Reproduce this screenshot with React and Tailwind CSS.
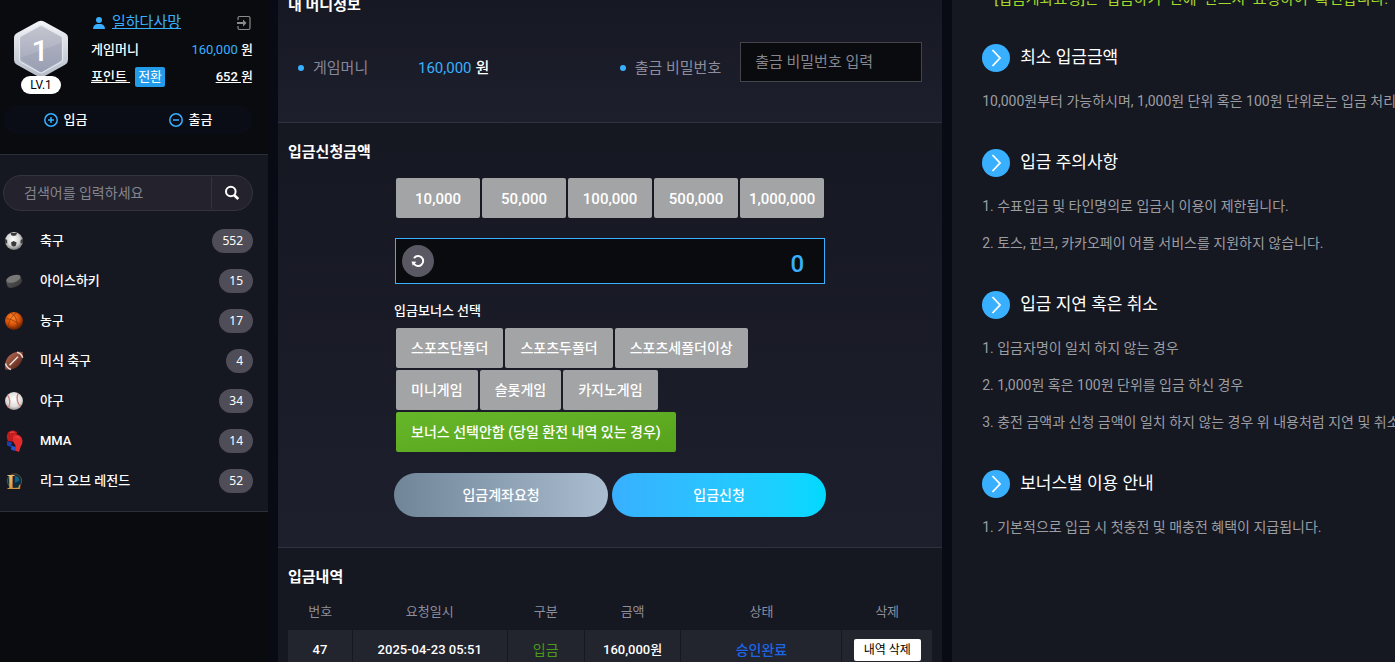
import React, { useState } from "react";

const SoccerIcon = () => (
  <svg width="22" height="22" viewBox="0 0 22 22" aria-hidden="true">
    <defs>
      <radialGradient id="soccer" cx="0.45" cy="0.4" r="0.6">
        <stop offset="0" stopColor="#ffffff" />
        <stop offset="0.6" stopColor="#d5d5d5" />
        <stop offset="1" stopColor="#777777" />
      </radialGradient>
      <clipPath id="soccerClip">
        <circle cx="11" cy="11" r="9" />
      </clipPath>
    </defs>
    <circle cx="11" cy="11" r="9" fill="url(#soccer)" />
    <g clipPath="url(#soccerClip)" fill="#3a3a3a">
      <path d="M8 12.400l2.600-1.400 3 1.400-.6 3.200-2.200 1.200-2.200-1.200z" />
      <path d="M7.600 3h6.400l-.8 2.200-2.500.8-2.400-.8z" />
      <path d="M1.500 8.500l2.600 1.400.2 3.200-2.500 1z" />
      <path d="M20.500 8.500l-2.800 1.400-.2 3.200 3 .8z" />
    </g>
  </svg>
);

const PuckIcon = () => (
  <svg width="22" height="22" viewBox="0 0 22 22" aria-hidden="true">
    <defs>
      <linearGradient id="puck" x1="0" y1="0" x2="1" y2="1">
        <stop offset="0" stopColor="#5e5e5e" />
        <stop offset="1" stopColor="#333333" />
      </linearGradient>
    </defs>
    <path d="M3.400 10.600c.2-3 8-6.800 13.600-5.200l2 5c.2 4-8 8.400-13 7.400-1.600-.6-3-4.600-2.600-7.200z" fill="url(#puck)" />
    <ellipse cx="10.400" cy="8.800" rx="7.400" ry="3.500" transform="rotate(-18 10.4 8.8)" fill="#777777" />
  </svg>
);

const BasketballIcon = () => (
  <svg width="22" height="22" viewBox="0 0 22 22" aria-hidden="true">
    <defs>
      <radialGradient id="basket" cx="0.42" cy="0.32" r="0.7">
        <stop offset="0" stopColor="#ff8a2a" />
        <stop offset="0.55" stopColor="#d9520a" />
        <stop offset="1" stopColor="#5a1a02" />
      </radialGradient>
    </defs>
    <circle cx="11" cy="11" r="9" fill="url(#basket)" />
    <path
      d="M3 8.500c5 .5 11 3 15 8M8 2.800c5 3 7 9 6 16M13.500 2.600c-4 3-8 8-8.500 14.500"
      fill="none"
      stroke="#8a3206"
      strokeWidth="0.7"
    />
  </svg>
);

const FootballIcon = () => (
  <svg width="22" height="22" viewBox="0 0 22 22" aria-hidden="true">
    <defs>
      <linearGradient id="foot" x1="0.2" y1="0.2" x2="0.8" y2="0.9">
        <stop offset="0" stopColor="#a9624a" />
        <stop offset="1" stopColor="#5a261b" />
      </linearGradient>
    </defs>
    <path
      d="M2.200 19.500C1 12 4 6.500 9 3.700c3.500-2 7.500-2.200 10.700-1.600.8 5-.4 9.600-4 13.400-3.600 3.700-8.500 5-13.500 4z"
      fill="url(#foot)"
    />
    <path
      d="M2.500 13.500c.8 3 2.500 5 5.500 6M14 2.200c3 .8 5 2.800 5.700 5.500"
      fill="none"
      stroke="#e3dad6"
      strokeWidth="1.500"
    />
    <path d="M6.500 15.200l8.500-8.500" stroke="#f2e6e0" strokeWidth="1.400" />
  </svg>
);

const BaseballIcon = () => (
  <svg width="22" height="22" viewBox="0 0 22 22" aria-hidden="true">
    <defs>
      <radialGradient id="base" cx="0.5" cy="0.4" r="0.6">
        <stop offset="0" stopColor="#ffffff" />
        <stop offset="0.7" stopColor="#dedbd9" />
        <stop offset="1" stopColor="#989391" />
      </radialGradient>
    </defs>
    <circle cx="11" cy="11" r="9" fill="url(#base)" />
    <path
      d="M4.300 5c3 3 3.200 9 1 12.800M15 3.400c-2 4.500-.6 10.600 2.700 13"
      fill="none"
      stroke="#cf7d79"
      strokeWidth="1.300"
    />
  </svg>
);

const GlovesIcon = () => (
  <svg width="22" height="24" viewBox="0 0 22 24" aria-hidden="true">
    <path d="M4 12l5 1.500-1 4.500-4-1.500z" fill="#1b3fae" />
    <path d="M5 3.500C7 .8 11.500.8 14 3l-2 10-7-1C3.300 9 3.500 5.800 5 3.500z" fill="#c21c20" />
    <path d="M10 7c2.500-2.700 7-1.300 8.700 2 1.600 3.500.5 6.500-1.200 9l-1.500 5-4-1.500.5-5-2.500-4z" fill="#e52a2c" />
    <path d="M7 4c1.500-1.200 3-1.200 4.500-.4M12.500 8.500c1.500-1 3.200-.4 4.200 1" fill="none" stroke="#f0544e" strokeWidth="1" />
    <path d="M8.500 16.500l4 1.400-1 4-3.500-1.500z" fill="#2754d6" />
  </svg>
);

const LeagueIcon = () => (
  <svg width="22" height="22" viewBox="0 0 22 22" aria-hidden="true">
    <defs>
      <linearGradient id="gold" x1="0" y1="0" x2="0" y2="1">
        <stop offset="0" stopColor="#f6d98a" />
        <stop offset="1" stopColor="#c9862b" />
      </linearGradient>
    </defs>
    <circle cx="11.500" cy="11" r="7.200" fill="#0a2c40" stroke="#6b5a30" strokeWidth="0.8" />
    <path d="M12 6c2.500 0 4.500 2 4.500 4.500L12 13z" fill="#11607d" />
    <text x="4" y="18.500" fontSize="21" fontWeight="700" fontFamily="Liberation Serif, serif" fill="url(#gold)">
      L
    </text>
  </svg>
);

const LevelBadge = () => (
  <svg width="56" height="58" viewBox="0 0 56 58" aria-hidden="true">
    <defs>
      <linearGradient id="rim" x1="0" y1="0" x2="0" y2="1">
        <stop offset="0" stopColor="#f4f5f8" />
        <stop offset="1" stopColor="#b4bcc8" />
      </linearGradient>
      <linearGradient id="face" x1="0" y1="0" x2="0" y2="1">
        <stop offset="0" stopColor="#c3c5cf" />
        <stop offset="1" stopColor="#9fa3b8" />
      </linearGradient>
    </defs>
    <path
      d="M25 1.500q3-1.500 6 0l21 11.500q3 1.700 3 5v22q0 3-3 4.700L31 56.500q-3 1.500-6 0L4 44.700Q1 43 1 40V18q0-3.300 3-5z"
      fill="url(#rim)"
    />
    <path
      d="M26.500 6q1.500-.8 3 0L48 16q1.500.8 1.500 2.500v21q0 1.700-1.500 2.500L29.500 52.500q-1.500.8-3 0L8 42q-1.500-.8-1.500-2.500v-21Q6.500 16.800 8 16z"
      fill="url(#face)"
      stroke="#e3e6ec"
      strokeWidth="1.200"
    />
    <path d="M7.500 38L48.500 23v16.500L28 52z" fill="#8f94aa" opacity="0.300" />
    <text x="27" y="41" textAnchor="middle" fontSize="30" fontWeight="500" fontFamily="Roboto, sans-serif" fill="#ffffff">
      1
    </text>
  </svg>
);

const sports = [
  { name: "축구", count: 552, Icon: SoccerIcon },
  { name: "아이스하키", count: 15, Icon: PuckIcon },
  { name: "농구", count: 17, Icon: BasketballIcon },
  { name: "미식 축구", count: 4, Icon: FootballIcon },
  { name: "야구", count: 34, Icon: BaseballIcon },
  { name: "MMA", count: 14, Icon: GlovesIcon },
  { name: "리그 오브 레전드", count: 52, Icon: LeagueIcon },
];

const amounts = [10000, 50000, 100000, 500000, 1000000];

const bonuses = [
  "스포츠단폴더",
  "스포츠두폴더",
  "스포츠세폴더이상",
  "미니게임",
  "슬롯게임",
  "카지노게임",
  "보너스 선택안함 (당일 환전 내역 있는 경우)",
];

const guides = [
  {
    title: "최소 입금금액",
    items: ["10,000원부터 가능하시며, 1,000원 단위 혹은 100원 단위로는 입금 처리"],
  },
  {
    title: "입금 주의사항",
    items: [
      "1. 수표입금 및 타인명의로 입금시 이용이 제한됩니다.",
      "2. 토스, 핀크, 카카오페이 어플 서비스를 지원하지 않습니다.",
    ],
  },
  {
    title: "입금 지연 혹은 취소",
    items: [
      "1. 입금자명이 일치 하지 않는 경우",
      "2. 1,000원 혹은 100원 단위를 입금 하신 경우",
      "3. 충전 금액과 신청 금액이 일치 하지 않는 경우 위 내용처럼 지연 및 취소",
    ],
  },
  {
    title: "보너스별 이용 안내",
    items: ["1. 기본적으로 입금 시 첫충전 및 매충전 혜택이 지급됩니다."],
  },
];

const history = [
  { id: 47, date: "2025-04-23 05:51", type: "입금", amount: "160,000원", status: "승인완료" },
];

const Sidebar = () => (
  <aside className="w-[268px] shrink-0 bg-[#0a0b0e]">
    <div className="border-b border-[#2d2f36] pt-[9px] pr-[15px] pb-5 pl-[3px]">
      <div className="flex">
        <div className="flex w-[76px] shrink-0 flex-col items-center pt-[11px]">
          <LevelBadge />
          <span className="relative -mt-0.5 h-[18px] w-10 rounded-full bg-white text-center text-xs leading-[18px] text-black">
            LV.1
          </span>
        </div>
        <div className="ml-3 flex-1 text-[13px] font-medium text-white">
          <div className="flex h-[27px] items-center">
            <svg width="16" height="14" viewBox="0 0 16 14" fill="#38b0ff" aria-hidden="true">
              <circle cx="8" cy="4" r="3" />
              <path d="M2 13c0-3 2-4.500 4-5h4c2 .5 4 2 4 5z" />
            </svg>
            <a href="#profile" className="ml-[5px] text-[15px] font-normal text-[#38b0ff] underline">
              일하다사망
            </a>
            <button type="button" aria-label="로그아웃" className="ml-auto">
              <svg width="17" height="16" viewBox="0 0 17 16" fill="none" stroke="#8b8b8b" aria-hidden="true">
                <path d="M2 5V3q0-1.500 1.500-1.500h9Q14 1.500 14 3v10q0 1.500-1.500 1.500h-9Q2 14.500 2 13v-2" strokeWidth="1.200" />
                <path d="M1 8h8" strokeWidth="2" />
                <path d="M7 4.500L10.500 8 7 11.500z" fill="#8b8b8b" stroke="none" />
              </svg>
            </button>
          </div>
          <div className="flex h-[27px] items-center justify-between">
            <span>게임머니</span>
            <span>
              <span className="font-normal text-[#38b0ff]">160,000</span> 원
            </span>
          </div>
          <div className="flex h-[27px] items-center">
            <a href="#point" className="whitespace-pre underline">
              {"포인트 "}
            </a>
            <button type="button" className="ml-[5px] h-5 w-[30px] rounded-xs bg-[#229cea] leading-5 font-normal">
              전환
            </button>
            <span className="ml-auto">
              <span className="whitespace-pre underline">{"652 "}</span>원
            </span>
          </div>
        </div>
      </div>
      <div className="mt-[11px] grid h-[29px] grid-cols-2 rounded-full bg-[#0a0d16] text-[13px] font-medium text-white">
        <button type="button" className="flex items-center justify-center gap-1.5">
          <svg width="14" height="14" viewBox="0 0 14 14" fill="none" stroke="#38b0ff" strokeWidth="1.500" aria-hidden="true">
            <circle cx="7" cy="7" r="6.200" />
            <path d="M7 4v6M4 7h6" />
          </svg>
          입금
        </button>
        <button type="button" className="flex items-center justify-center gap-1.5">
          <svg width="14" height="14" viewBox="0 0 14 14" fill="none" stroke="#38b0ff" strokeWidth="1.500" aria-hidden="true">
            <circle cx="7" cy="7" r="6.200" />
            <path d="M4 7h6" />
          </svg>
          출금
        </button>
      </div>
    </div>

    <div className="border-b border-[#2d2f36] bg-[#151721] pt-5 pr-[15px] pb-2.5 pl-[3px]">
      <div className="flex h-9 items-center rounded-full border border-[#343340] bg-[#23222d]">
        <input
          type="text"
          aria-label="검색어"
          placeholder="검색어를 입력하세요"
          className="h-8 min-w-0 flex-1 border-r border-[#343340] bg-transparent pl-5 text-sm text-white outline-none placeholder:text-[#85858f]"
        />
        <button type="button" aria-label="검색" className="flex w-10 justify-center">
          <svg width="16" height="16" viewBox="0 0 16 16" fill="none" stroke="#ffffff" aria-hidden="true">
            <circle cx="6.800" cy="6.500" r="4.800" strokeWidth="2" />
            <path d="M10.300 10.200l4 3.800" strokeWidth="2.600" />
          </svg>
        </button>
      </div>
      <ul className="mt-2.5">
        {sports.map(({ name, count, Icon }) => (
          <li key={name}>
            <a href="#sports" className="flex h-10 items-center text-[13px] font-medium text-white">
              <span className="flex w-[22px] justify-center">
                <Icon />
              </span>
              <span className="ml-[15px]">{name}</span>
              <span className="ml-auto h-6 rounded-full bg-[#4e4d58] px-2.5 font-['Noto_Sans'] text-xs leading-6 font-normal">
                {count}
              </span>
            </a>
          </li>
        ))}
      </ul>
    </div>
  </aside>
);

const MoneyInfo = () => (
  <section className="border-b border-[#30323f] bg-linear-to-b from-[#151721] to-[#1e1f2d] pt-[11px] pb-10">
    <h2 className="px-2.5 text-[15px] leading-5 font-bold text-white">내 머니정보</h2>
    <div className="mt-[27px] flex h-10 items-center justify-between px-5 text-[15px]">
      <div className="flex items-center pt-3">
        <span className="size-1.5 rounded-full bg-[#38b0ff]" />
        <span className="w-[114px] pl-[9px] text-[#85869a]">게임머니</span>
        <span className="text-[#38b0ff]">160,000</span>
        <span className="ml-1 font-medium text-white">원</span>
      </div>
      <div className="flex items-center gap-[19px]">
        <label htmlFor="withdraw-password" className="flex items-center gap-[9px] pt-3 text-[#8d8e9c]">
          <span className="size-1.5 rounded-full bg-[#38b0ff]" />
          출금 비밀번호
        </label>
        <input
          id="withdraw-password"
          type="password"
          placeholder="출금 비밀번호 입력"
          className="h-10 w-[182px] border border-[#44454c] bg-[#0a0b0e] px-3.5 text-white outline-none placeholder:text-[#85868f]"
        />
      </div>
    </div>
  </section>
);

const DepositForm = () => {
  const [amount, setAmount] = useState(0);
  const [bonus, setBonus] = useState(bonuses.length - 1);

  const handleAmount = (e) => {
    setAmount(Number(e.target.value.replace(/\D/g, "")));
  };

  return (
    <section className="border-b border-[#30323f] bg-linear-to-b from-[#151721] to-[#1e1f2d] pt-[19px] pb-[30px]">
      <h2 id="deposit-amount" className="px-2.5 text-[15px] leading-5 font-bold text-white">
        입금신청금액
      </h2>
      <div className="mx-auto mt-4 w-[432px]">
        <div className="grid grid-cols-5 gap-0.5 px-0.5">
          {amounts.map((value) => (
            <button
              key={value}
              type="button"
              onClick={() => setAmount(amount + value)}
              className="h-10 rounded-xs bg-[#a3a4a5] pt-0.5 text-[15px] font-medium text-white"
            >
              {value.toLocaleString("en-US")}
            </button>
          ))}
        </div>

        <div className="mx-px mt-5 flex h-[46px] items-center border border-[#38b0ff] bg-[#0a0b0e] pr-5 pl-1.5">
          <button
            type="button"
            aria-label="초기화"
            onClick={() => setAmount(0)}
            className="flex size-8 shrink-0 items-center justify-center rounded-full bg-[#595863]"
          >
            <svg width="14" height="14" viewBox="0 0 14 14" fill="none" stroke="#ffffff" aria-hidden="true">
              <path d="M3 4.200a5 5 0 1 1 0 5.600" strokeWidth="2" />
              <path d="M.6 7.500l4.800.3-3.600 4z" fill="#ffffff" stroke="none" />
            </svg>
          </button>
          <input
            type="text"
            aria-labelledby="deposit-amount"
            value={amount.toLocaleString("en-US")}
            onChange={handleAmount}
            className="h-10 min-w-0 flex-1 bg-transparent pt-1.5 text-right text-2xl font-medium text-[#38b0ff] outline-none"
          />
        </div>

        <h3 className="mt-[17px] text-[13px] leading-5 font-medium text-white">입금보너스 선택</h3>
        <div className="mt-[7px] flex flex-wrap gap-0.5 px-0.5">
          {bonuses.map((name, i) => (
            <button
              key={name}
              type="button"
              aria-pressed={bonus === i}
              onClick={() => setBonus(i)}
              className={`h-10 rounded-xs px-[15px] text-sm font-medium text-white ${
                bonus === i ? "bg-linear-to-br from-[#67b72a] to-[#56a21b]" : "bg-[#a3a4a5]"
              }`}
            >
              {name}
            </button>
          ))}
        </div>

        <div className="mt-[21px] grid grid-cols-2 gap-1 text-sm font-medium text-white">
          <button type="button" className="h-11 rounded-full bg-linear-to-r from-[#708698] to-[#abbdd0]">
            입금계좌요청
          </button>
          <button type="button" className="h-11 rounded-full bg-linear-to-r from-[#38b0ff] to-[#00d9ff]">
            입금신청
          </button>
        </div>
      </div>
    </section>
  );
};

const DepositHistory = () => (
  <section className="bg-[#151721] px-2.5 pt-[19px] pb-5">
    <h2 className="text-[15px] leading-5 font-bold text-white">입금내역</h2>
    <table className="mt-[7px] w-full table-fixed text-center text-[13px]">
      <thead>
        <tr className="h-9 text-[#8d8e9c]">
          <th className="w-[10%] font-normal">번호</th>
          <th className="w-[24%] font-normal">요청일시</th>
          <th className="w-[12%] font-normal">구분</th>
          <th className="w-[15%] font-normal">금액</th>
          <th className="w-[25%] font-normal">상태</th>
          <th className="w-[14%] font-normal">삭제</th>
        </tr>
      </thead>
      <tbody>
        {history.map((row) => (
          <tr key={row.id} className="h-10 bg-[#22242e] font-medium text-white">
            <td className="border-r border-[#151721]">{row.id}</td>
            <td className="border-r border-[#151721]">{row.date}</td>
            <td className="border-r border-[#151721] text-sm font-normal text-[#4c9a1c]">{row.type}</td>
            <td className="border-r border-[#151721]">{row.amount}</td>
            <td className="border-r border-[#151721] text-sm text-[#1c66e6]">{row.status}</td>
            <td>
              <button type="button" className="h-[22px] w-[67px] rounded-xs bg-white align-middle text-xs font-normal text-black">
                내역 삭제
              </button>
            </td>
          </tr>
        ))}
      </tbody>
    </table>
  </section>
);

const Guide = () => (
  <aside className="-mt-4 min-w-0 flex-2 overflow-hidden bg-[#151721] whitespace-nowrap">
    <div className="pt-[3px] pl-[30px]">
      <p className="mb-[33px] pl-3 text-[15px] leading-6 whitespace-pre text-[#a3d92b]">
        {"[입금계좌요청]은  입금하기  전에  반드시  요청하여  확인합니다."}
      </p>
      {guides.map((guide) => (
        <div key={guide.title} className="mb-[29px]">
          <h3 className="flex h-7 items-center gap-2.5 text-[17px] text-white">
            <svg width="28" height="28" viewBox="0 0 28 28" fill="none" aria-hidden="true">
              <circle cx="14" cy="14" r="14" fill="#38b0ff" />
              <path d="M10.500 6l7.500 8-7.500 8" stroke="#ffffff" strokeWidth="1.800" />
            </svg>
            {guide.title}
          </h3>
          <ul className="mt-[11px] text-sm leading-[37px] text-[#9c9da1]">
            {guide.items.map((item) => (
              <li key={item}>{item}</li>
            ))}
          </ul>
        </div>
      ))}
    </div>
  </aside>
);

const App = () => {
  return (
    <div className="flex h-screen gap-2.5 overflow-hidden bg-[#090b14] font-['Roboto','Noto_Sans_CJK_KR',sans-serif]">
      <Sidebar />
      <main className="-mt-4 min-w-0 flex-3">
        <MoneyInfo />
        <DepositForm />
        <DepositHistory />
      </main>
      <Guide />
    </div>
  );
};

export default App;
